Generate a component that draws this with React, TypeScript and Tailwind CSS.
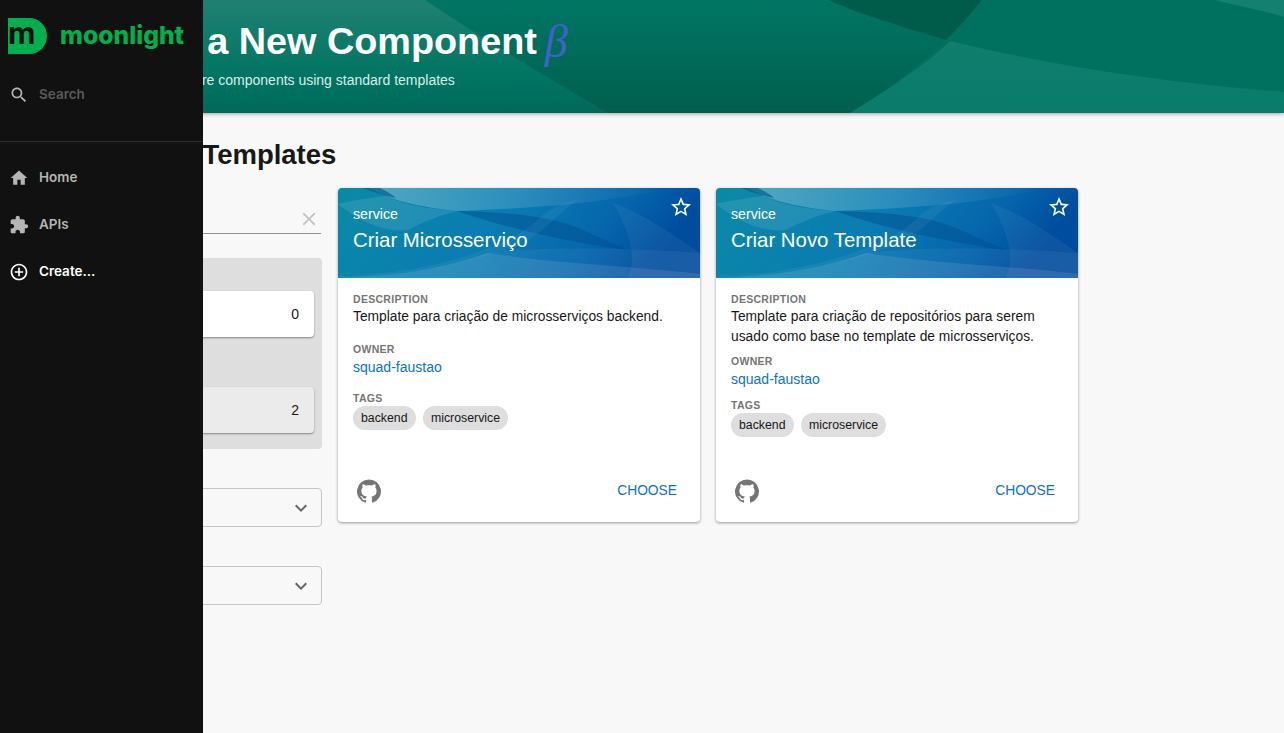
import React from "react";

const P = {
  search: "M15.5 14h-.79l-.28-.27C15.41 12.59 16 11.11 16 9.5 16 5.91 13.09 3 9.5 3S3 5.91 3 9.5 5.91 16 9.5 16c1.61 0 3.09-.59 4.23-1.57l.27.28v.79l5 4.99L20.49 19l-4.99-5zm-6 0C7.01 14 5 11.99 5 9.5S7.01 5 9.5 5 14 7.01 14 9.5 11.99 14 9.5 14z",
  home: "M10 20v-6h4v6h5v-8h3L12 3 2 12h3v8z",
  ext: "M20.5 11H19V7c0-1.1-.9-2-2-2h-4V3.5C13 2.12 11.88 1 10.5 1S8 2.12 8 3.5V5H4c-1.1 0-1.99.9-1.99 2v3.8H3.5c1.49 0 2.7 1.21 2.7 2.7s-1.21 2.7-2.7 2.7H2V20c0 1.1.9 2 2 2h3.8v-1.5c0-1.49 1.21-2.7 2.7-2.7 1.49 0 2.7 1.21 2.7 2.7V22H17c1.1 0 2-.9 2-2v-4h1.5c1.38 0 2.5-1.12 2.5-2.5S21.88 11 20.5 11z",
  add: "M13 7h-2v4H7v2h4v4h2v-4h4v-2h-4V7zm-1-5C6.48 2 2 6.48 2 12s4.48 10 10 10 10-4.48 10-10S17.52 2 12 2zm0 18c-4.41 0-8-3.59-8-8s3.59-8 8-8 8 3.59 8 8-3.59 8-8 8z",
  star: "M22 9.24l-7.19-.62L12 2 9.19 8.63 2 9.24l5.46 4.73L5.82 21 12 17.27 18.18 21l-1.63-7.03L22 9.24zM12 15.4l-3.76 2.27 1-4.28-3.32-2.88 4.38-.38L12 6.1l1.71 4.04 4.38.38-3.32 2.88 1 4.28L12 15.4z",
  close: "M19 6.41L17.59 5 12 10.59 6.41 5 5 6.41 10.59 12 5 17.59 6.41 19 12 13.41 17.59 19 19 17.59 13.41 12z",
  more: "M16.59 8.59L12 13.17 7.41 8.59 6 10l6 6 6-6z",
  github: "M12 1.27a11 11 0 00-3.48 21.46c.55.09.73-.28.73-.55v-1.84c-3.03.64-3.67-1.46-3.67-1.46-.55-1.29-1.28-1.65-1.28-1.65-.92-.65.1-.65.1-.65 1.1 0 1.73 1.1 1.73 1.1.92 1.65 2.57 1.2 3.21.92a2 2 0 01.64-1.47c-2.47-.27-5.04-1.19-5.04-5.5 0-1.1.46-2.1 1.2-2.84a3.76 3.76 0 010-2.93s.91-.28 3.11 1.1c1.8-.49 3.7-.49 5.5 0 2.1-1.38 3.02-1.1 3.02-1.1a3.76 3.76 0 010 2.93c.83.74 1.2 1.74 1.2 2.94 0 4.21-2.57 5.13-5.04 5.4.45.37.82.92.82 2.02v3.03c0 .27.1.64.73.55A11 11 0 0012 1.27",
};

function Icon({ d, className }: { d: string; className: string }) {
  return (
    <svg viewBox="0 0 24 24" fill="currentColor" className={className}>
      <path d={d} />
    </svg>
  );
}

function HeaderArt() {
  return (
    <svg className="absolute inset-0 w-full h-full" viewBox="0 0 1232 113" preserveAspectRatio="none">
      <defs>
        <linearGradient id="hl" x1="0" y1="0" x2="0" y2="1">
          <stop offset="0" stopColor="#208172" />
          <stop offset="0.65" stopColor="#017563" />
          <stop offset="1" stopColor="#00695a" />
        </linearGradient>
        <linearGradient id="hm" x1="0" y1="0" x2="0" y2="1">
          <stop offset="0" stopColor="#017664" />
          <stop offset="1" stopColor="#005f4e" />
        </linearGradient>
        <linearGradient id="hd" x1="0" y1="0" x2="0" y2="1">
          <stop offset="0" stopColor="#117d6d" />
          <stop offset="1" stopColor="#087c6b" />
        </linearGradient>
      </defs>
      <rect width="1232" height="113" fill="url(#hm)" />
      <path d="M0 0H373C440 45 500 80 556 113H0Z" fill="url(#hl)" />
      <path d="M776 0H930C915 18 905 30 898 41C860 30 810 15 776 0Z" fill="#005c4a" />
      <path d="M930 0H1232V113H798C845 85 890 50 930 0Z" fill="#00705f" />
      <path d="M898 41C1000 66 1110 82 1232 92V113H798C835 90 870 68 898 41Z" fill="url(#hd)" />
      <path d="M1163 0H1232V17C1210 10 1185 6 1163 0Z" fill="#148070" />
    </svg>
  );
}

function CardArt({ id }: { id: string }) {
  return (
    <svg className="absolute inset-0 w-full h-full" viewBox="0 0 362 90" preserveAspectRatio="none">
      <defs>
        <linearGradient id={`cb${id}`} x1="0" y1="0" x2="1" y2="0.2">
          <stop offset="0" stopColor="#0a8aa6" />
          <stop offset="0.5" stopColor="#0a7cb2" />
          <stop offset="0.8" stopColor="#0565ac" />
          <stop offset="1" stopColor="#004c9e" />
        </linearGradient>
        <linearGradient id={`cp${id}`} x1="0" y1="0" x2="1" y2="0">
          <stop offset="0" stopColor="#ffffff" stopOpacity="0.28" />
          <stop offset="0.55" stopColor="#ffffff" stopOpacity="0.12" />
          <stop offset="1" stopColor="#ffffff" stopOpacity="0" />
        </linearGradient>
      </defs>
      <rect width="362" height="90" fill={`url(#cb${id})`} />
      <path d="M30 0H330C270 15 200 20 119 23C90 20 65 15 48 8C42 5 36 2 30 0Z" fill={`url(#cp${id})`} />
      <path d="M0 16C16 12 32 10 48 8C60 14 78 20 119 23C100 28 85 34 70 42C45 45 20 32 0 16Z" fill="#ffffff" opacity="0.1" />
      <path d="M25 0H42C48 3 54 6 58 10C46 8 36 4 25 0Z" fill="#005f8f" opacity="0.7" />
      <path d="M119 23C170 24 215 28 245 42C262 50 280 58 290 62C240 55 180 44 119 23Z" fill="#004f8f" opacity="0.5" />
      <path d="M0 88C90 86 160 62 195 36C210 20 225 14 240 12C220 25 210 40 190 52C150 72 60 90 0 90Z" fill="#ffffff" opacity="0.05" />
      <path d="M0 90C70 88 120 76 150 65C220 76 300 78 362 86V90Z" fill="#ffffff" opacity="0.14" />
      <path d="M150 65C200 58 300 60 362 65V86C300 78 220 76 150 65Z" fill="#ffffff" opacity="0.05" />
      <path d="M275 15C310 28 340 50 362 65V90H290C300 70 290 40 275 15Z" fill="#ffffff" opacity="0.05" />
    </svg>
  );
}

function Label({ children }: { children: React.ReactNode }) {
  return <div className="text-[10.5px] leading-[14px] font-bold tracking-[0.3px] uppercase text-[#757575]">{children}</div>;
}

function Tag({ children }: { children: React.ReactNode }) {
  return (
    <span className="h-[24px] flex items-center px-2 rounded-full bg-[#dedede] text-[12.3px] text-[#181818]">{children}</span>
  );
}

function Card({ id, title, desc, ownerGap, tagsGap }: { id: string; title: string; desc: string; ownerGap: string; tagsGap: string }) {
  return (
    <div className="flex flex-col rounded bg-white overflow-hidden shadow-[0_1px_3px_rgba(0,0,0,0.4)] w-[362px] h-[334px]">
      <div className="relative h-[90px] shrink-0 px-[15px] pt-[17px] text-white">
        <CardArt id={id} />
        <div className="relative text-[14.2px] leading-[18px]">service</div>
        <div className="relative mt-[3px] text-[20.4px] leading-[28px]">{title}</div>
        <Icon d={P.star} className="absolute right-[7px] top-[7px] w-[24px] h-[24px] text-white" />
      </div>
      <div className="flex-1 flex flex-col px-[15px] pt-[14px]">
        <Label>Description</Label>
        <div className="text-[13.8px] leading-[20px] text-[#181818] mt-[1px]">{desc}</div>
        <div className={ownerGap}><Label>Owner</Label></div>
        <div className="text-[14px] leading-[20px] text-[#0b72cc] mt-px">squad-faustao</div>
        <div className={tagsGap}><Label>Tags</Label></div>
        <div className="flex gap-[7.5px] mt-px">
          <Tag>backend</Tag>
          <Tag>microservice</Tag>
        </div>
        <div className="mt-auto pb-[18px] flex items-center justify-between pl-[3px] pr-[8px]">
          <Icon d={P.github} className="w-[26px] h-[26px] text-[#757575]" />
          <span className="text-[13.8px] text-[#0b72cc] mt-[1px]">CHOOSE</span>
        </div>
      </div>
    </div>
  );
}

function NavItem({ d, label, tone }: { d: string; label: string; tone: string }) {
  return (
    <div className={`h-[47px] flex items-center pl-[9px] ${tone}`}>
      <Icon d={d} className="w-[20px] h-[20px] shrink-0" />
      <span className="ml-[10px] text-[13.5px] font-semibold">{label}</span>
    </div>
  );
}

export default function App() {
  return (
    <div className="relative h-[733px] w-full overflow-hidden bg-[#f8f8f8] font-['Liberation_Sans',Arial,sans-serif]">
      <main className="pl-[52px]">
        <header className="relative h-[113px] shadow-[0_1px_4px_rgba(0,0,0,0.35)] pl-[24px] text-white">
          <HeaderArt />
          <div className="relative pt-[18px] flex items-center h-[65px]">
            <h1 className="ml-[3px] text-[37.8px] font-bold whitespace-nowrap">Create a New Component</h1>
            <span className="ml-[8px] text-[46px] leading-[46px] italic text-[#3f62cc] font-['Liberation_Serif',serif]">β</span>
          </div>
          <p className="relative text-[14px] leading-[20px] text-[#dcecea] mt-[5px] ml-[10px] whitespace-nowrap">Create new software components using standard templates</p>
        </header>
        <section className="px-[24px]">
          <h2 className="-ml-px pt-[24px] text-[27.5px] leading-[36px] font-bold text-[#181818] whitespace-nowrap">Available Templates</h2>
          <div className="mt-[15px] flex gap-[16px] items-start">
            <aside className="w-[246px] shrink-0">
              <div className="h-[46px] border-b border-[#949494] w-[245px] flex items-start justify-end pt-[20px]">
                <Icon d={P.close} className="w-[22px] h-[22px] text-[#c4c4c4] mr-px" />
              </div>
              <div className="mt-[24px] h-[191px] rounded bg-[#dedede] pt-[33px] pr-[8px]">
                <div className="h-[46px] rounded bg-white shadow-[0_1px_2px_rgba(0,0,0,0.4)] flex items-center justify-end pr-[15px] text-[14px] text-[#181818]">0</div>
                <div className="mt-[50px] h-[46px] rounded bg-[#ebebeb] shadow-[0_1px_2px_rgba(0,0,0,0.4)] flex items-center justify-end pr-[15px] text-[14px] text-[#181818]">2</div>
              </div>
              <div className="mt-[39px] h-[39px] rounded border border-[#c4c4c4] flex items-center justify-end pr-[8px]">
                <Icon d={P.more} className="w-[24px] h-[24px] text-[#666666]" />
              </div>
              <div className="mt-[39px] h-[39px] rounded border border-[#c4c4c4] flex items-center justify-end pr-[8px]">
                <Icon d={P.more} className="w-[24px] h-[24px] text-[#666666]" />
              </div>
            </aside>
            <div className="flex gap-[16px]">
              <Card id="a" title="Criar Microsserviço" desc="Template para criação de microsserviços backend." ownerGap="mt-[15px]" tagsGap="mt-[14px]" />
              <Card id="b" title="Criar Novo Template" desc="Template para criação de repositórios para serem usado como base no template de microsserviços." ownerGap="mt-[7px]" tagsGap="mt-[9px]" />
            </div>
          </div>
        </section>
      </main>
      <nav className="absolute left-0 top-0 bottom-0 w-[203px] bg-[#111111] font-['Inter',sans-serif]">
        <div className="h-[71px] pl-[8px] flex items-center">
          <div className="w-[39px] h-[36px] bg-[#00b04f] rounded-r-[18px] flex items-end overflow-hidden">
            <span className="text-[30px] leading-[30px] font-bold text-[#111111] mb-[6px]">m</span>
          </div>
          <span className="ml-[13px] text-[24.7px] font-extrabold text-[#00b04f]">moonlight</span>
        </div>
        <div className="h-[71px] border-b border-[#2c2c2c] flex items-start">
          <div className="h-[47px] flex items-center pl-[9px] text-[#b5b5b5]">
            <Icon d={P.search} className="w-[20px] h-[20px]" />
            <span className="ml-[10px] text-[13.5px] font-semibold text-[#5a5a5a]">Search</span>
          </div>
        </div>
        <div className="pt-[12px]">
          <NavItem d={P.home} label="Home" tone="text-[#b5b5b5]" />
          <NavItem d={P.ext} label="APIs" tone="text-[#b5b5b5]" />
          <NavItem d={P.add} label="Create..." tone="text-white" />
        </div>
      </nav>
    </div>
  );
}
